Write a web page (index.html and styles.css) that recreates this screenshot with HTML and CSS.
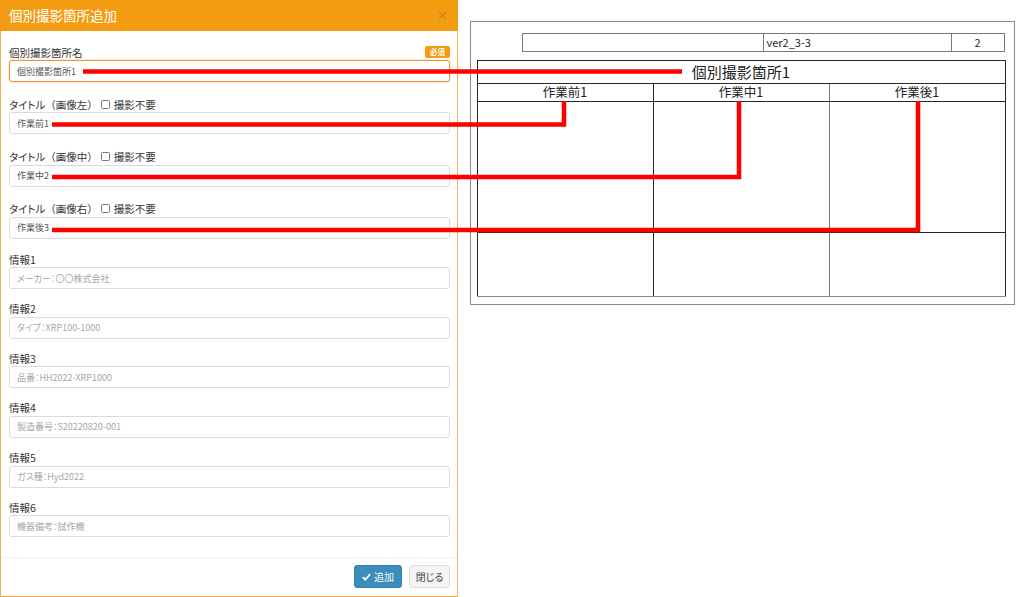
FILE: index.html
```html
<!DOCTYPE html>
<html lang="ja">
<head>
<meta charset="utf-8">
<title>個別撮影箇所追加</title>
<link rel="stylesheet" href="styles.css">
</head>
<body>
<div class="page">
  <div class="modal">
    <div class="modal-header">
      <h1 class="modal-title">個別撮影箇所追加</h1>
      <svg class="close" width="9" height="9" viewBox="0 0 9 9"><path d="M1 1L8 8M8 1L1 8"/></svg>
    </div>
    <div class="modal-body">
      <div class="group title-group">
        <div class="label-row"><span class="label">個別撮影箇所名</span><span class="badge">必須</span></div>
        <input class="field focus" value="個別撮影箇所1">
      </div>
      <div class="group title-group">
        <div class="label-row"><span class="label"><span class="kana">タイトル</span>（画像左）</span><span class="check"></span><span class="check-text">撮影不要</span></div>
        <input class="field" value="作業前1">
      </div>
      <div class="group title-group">
        <div class="label-row"><span class="label"><span class="kana">タイトル</span>（画像中）</span><span class="check"></span><span class="check-text">撮影不要</span></div>
        <input class="field" value="作業中2">
      </div>
      <div class="group title-group last-title">
        <div class="label-row"><span class="label"><span class="kana">タイトル</span>（画像右）</span><span class="check"></span><span class="check-text">撮影不要</span></div>
        <input class="field" value="作業後3">
      </div>
      <div class="group">
        <div class="label-row"><span class="label">情報1</span></div>
        <input class="field" placeholder="メーカー：〇〇株式会社">
      </div>
      <div class="group">
        <div class="label-row"><span class="label">情報2</span></div>
        <input class="field" placeholder="タイプ：XRP100-1000">
      </div>
      <div class="group">
        <div class="label-row"><span class="label">情報3</span></div>
        <input class="field" placeholder="品番：HH2022-XRP1000">
      </div>
      <div class="group">
        <div class="label-row"><span class="label">情報4</span></div>
        <input class="field" placeholder="製造番号：S20220820-001">
      </div>
      <div class="group">
        <div class="label-row"><span class="label">情報5</span></div>
        <input class="field" placeholder="ガス種：Hyd2022">
      </div>
      <div class="group last">
        <div class="label-row"><span class="label">情報6</span></div>
        <input class="field" placeholder="機器備考：試作機">
      </div>
    </div>
    <div class="modal-footer">
      <button class="btn btn-primary"><svg class="check-icon" width="9" height="8" viewBox="0 0 9 8"><path d="M0.8 4.2L3.3 6.6L8.2 1.2"/></svg>追加</button>
      <button class="btn btn-default">閉じる</button>
    </div>
  </div>

  <div class="sheet-area">
    <div class="sheet">
      <table class="meta">
        <tr>
          <td class="meta-blank"></td>
          <td class="meta-ver">ver2_3-3</td>
          <td class="meta-page">2</td>
        </tr>
      </table>
      <table class="grid">
        <tr class="row-title"><td colspan="3">個別撮影箇所1</td></tr>
        <tr class="row-head"><td>作業前1</td><td>作業中1</td><td>作業後1</td></tr>
        <tr class="row-photo"><td></td><td></td><td></td></tr>
        <tr class="row-info"><td></td><td></td><td></td></tr>
      </table>
    </div>
  </div>
</div>

<svg class="callouts" width="1016" height="597" viewBox="0 0 1016 597">
  <path d="M83 71.5H682"/>
  <path d="M52 124.5H564V101"/>
  <path d="M52 177H739V101"/>
  <path d="M52 230H918V101"/>
</svg>
</body>
</html>
```

FILE: styles.css
```css
* { box-sizing: border-box; }

html, body {
  margin: 0;
  padding: 0;
  background: #ffffff;
}

body {
  width: 1016px;
  height: 597px;
  overflow: hidden;
  position: relative;
  font-family: "Noto Sans CJK JP", "Noto Sans", sans-serif;
  color: #333333;
}

.page {
  display: flex;
  align-items: flex-start;
}

/* ---------- modal ---------- */
.modal {
  width: 458px;
  height: 597px;
  border: 1px solid #f2b04c;
  border-top: 0;
  display: flex;
  flex-direction: column;
  background: #ffffff;
}

.modal-header {
  flex: 0 0 31px;
  height: 31px;
  background: #f39c12;
  display: flex;
  align-items: center;
  justify-content: space-between;
  padding: 0 11px 0 9px;
  margin: 0 -1px;
}

.modal-title {
  margin: 0;
  font-size: 13.5px;
  font-weight: 400;
  color: #ffffff;
  line-height: 1;
  font-feature-settings: "palt";
}

.close {
  fill: none;
  stroke: #c98420;
  stroke-width: 1.3;
}

.modal-body {
  flex: 0 0 auto;
  padding: 14px 7px 0 8px;
  height: 526px;
}

.group {
  display: flex;
  flex-direction: column;
  gap: 1px;
  margin-bottom: 12.6px;
}

.group.title-group { margin-bottom: 15.3px; }
.group.last-title { margin-bottom: 13.3px; }
.group.last { margin-bottom: 0; }

.label-row {
  height: 14px;
  display: flex;
  align-items: center;
  font-size: 10.5px;
  color: #333333;
  white-space: nowrap;
}

.kana {
  font-feature-settings: "palt";
}

.badge {
  margin-left: auto;
  height: 12px;
  padding: 0 5px;
  background: #f39c12;
  color: #ffffff;
  font-size: 7.5px;
  font-weight: 700;
  line-height: 12px;
  border-radius: 2px;
}

.check {
  width: 9px;
  height: 9px;
  border: 1px solid #777777;
  border-radius: 1.5px;
  margin-left: 3px;
  background: #ffffff;
}

.check-text {
  margin-left: 4px;
}

.field {
  display: block;
  width: 100%;
  height: 22px;
  margin: 0;
  padding: 0 7px;
  border: 1px solid #d8dbe2;
  border-radius: 3px;
  background: #ffffff;
  font-family: "Noto Sans CJK JP", "Noto Sans", sans-serif;
  font-size: 9px;
  color: #555555;
  font-feature-settings: "palt";
  outline: none;
}

.field::placeholder {
  color: #a6a6a6;
}

.field.focus {
  border-color: #f0923a;
  box-shadow: 0 0 0 1px rgba(243, 156, 18, 0.18);
}

.modal-footer {
  flex: 0 0 39px;
  border-top: 1px solid #f3f3f3;
  padding: 7px 7px 8px 8px;
  display: flex;
  justify-content: flex-end;
  gap: 7px;
}

.btn {
  height: 23px;
  margin: 0;
  padding: 0;
  border-radius: 3px;
  font-family: "Noto Sans CJK JP", "Noto Sans", sans-serif;
  font-size: 10px;
  display: flex;
  align-items: center;
  justify-content: center;
  gap: 3px;
  white-space: nowrap;
  font-feature-settings: "palt";
}

.btn-primary {
  width: 48px;
  background: #3c8dbc;
  border: 1px solid #367fa9;
  color: #ffffff;
}

.check-icon {
  fill: none;
  stroke: #ffffff;
  stroke-width: 1.8;
}

.btn-default {
  width: 41px;
  background: #f4f4f4;
  border: 1px solid #dddddd;
  color: #444444;
}

/* ---------- sheet diagram ---------- */
.sheet-area {
  padding: 21px 0 0 12px;
}

.sheet {
  width: 545px;
  height: 284px;
  border: 1.5px solid #8c8a8a;
  padding-top: 10.5px;
  display: flex;
  flex-direction: column;
  font-family: "Noto Sans CJK JP", "Noto Sans", sans-serif;
  color: #222222;
}

.meta {
  margin-left: 50.5px;
  width: 482px;
  height: 19px;
  border-collapse: collapse;
  border: 1.5px solid #7a7777;
  table-layout: fixed;
}

.meta td {
  border: 1px solid #7a7777;
  padding: 0;
  font-size: 11px;
  line-height: 1;
  height: 17px;
}

.meta-blank { width: 241px; }
.meta-ver { width: 188px; padding-left: 3px !important; }
.meta-page { width: 53px; text-align: center; }

.grid {
  margin-top: 8px;
  margin-left: 5.5px;
  width: 529px;
  border-collapse: collapse;
  table-layout: fixed;
  border: 1px solid #2a2626;
}

.grid td {
  border: 1px solid #2a2626;
  padding: 0;
  text-align: center;
  line-height: 1;
}

.grid td:nth-child(2) { border-left-color: #555; border-right-color: #777; }

.row-title td { height: 23px; font-size: 15px; }
.row-head td { height: 18px; font-size: 12.5px; }
.row-photo td { height: 131px; }
.row-info td { height: 64px; }
.row-info td { border-bottom-color: #8a8888; }

/* ---------- callout lines ---------- */
.callouts {
  position: absolute;
  left: 0;
  top: 0;
  pointer-events: none;
}

.callouts path {
  fill: none;
  stroke: #ff0000;
  stroke-width: 4.5;
  stroke-linejoin: miter;
  stroke-linecap: butt;
}
```
